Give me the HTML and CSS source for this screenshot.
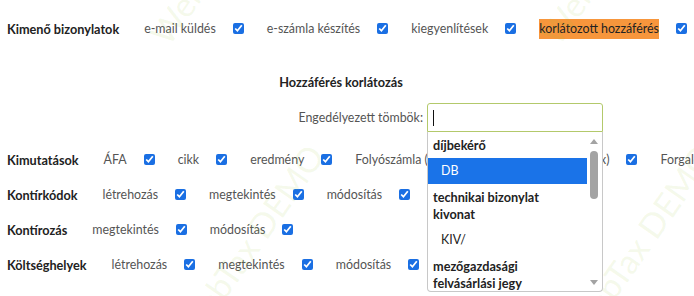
FILE: index.html
```html
<!DOCTYPE html>
<html lang="hu">
<head>
    <meta charset="UTF-8">
    <title>Jogosultságok</title>
    <link rel="stylesheet" href="styles.css">
</head>
<body>
    <div class="page">
        <div class="perm-row">
            <span class="group">Kimenő bizonylatok</span>
            <span class="item">e-mail küldés</span><input type="checkbox" checked>
            <span class="item">e-számla készítés</span><input type="checkbox" checked>
            <span class="item">kiegyenlítések</span><input type="checkbox" checked>
            <span class="item marked">korlátozott hozzáférés</span><input type="checkbox" checked>
        </div>

        <div class="limit">
            <h3>Hozzáférés korlátozás</h3>
            <div class="limit-row">
                <label>Engedélyezett tömbök:</label>
                <div class="picker">
                    <div class="picker-input"><span class="caret"></span></div>
                    <div class="picker-list">
                        <div class="options">
                            <div class="opt-group">díjbekérő</div>
                            <div class="opt selected">DB</div>
                            <div class="opt-group">technikai bizonylat<br>kivonat</div>
                            <div class="opt">KIV/</div>
                            <div class="opt-group">mezőgazdasági<br>felvásárlási jegy</div>
                        </div>
                        <div class="scrollbar">
                            <span class="arrow up"></span>
                            <span class="thumb"></span>
                            <span class="arrow down"></span>
                        </div>
                    </div>
                </div>
            </div>
        </div>

        <div class="perm-row">
            <span class="group">Kimutatások</span>
            <span class="item">ÁFA</span><input type="checkbox" checked>
            <span class="item">cikk</span><input type="checkbox" checked>
            <span class="item">eredmény</span><input type="checkbox" checked>
            <span class="item">Folyószámla (Analitika, Kivonat, Excel, Fix, xlsx)</span><input type="checkbox" checked>
            <span class="item">Forgalom</span>
        </div>
        <div class="perm-row">
            <span class="group">Kontírkódok</span>
            <span class="item">létrehozás</span><input type="checkbox" checked>
            <span class="item">megtekintés</span><input type="checkbox" checked>
            <span class="item">módosítás</span><input type="checkbox" checked>
        </div>
        <div class="perm-row">
            <span class="group">Kontírozás</span>
            <span class="item">megtekintés</span><input type="checkbox" checked>
            <span class="item">módosítás</span><input type="checkbox" checked>
        </div>
        <div class="perm-row">
            <span class="group">Költséghelyek</span>
            <span class="item">létrehozás</span><input type="checkbox" checked>
            <span class="item">megtekintés</span><input type="checkbox" checked>
            <span class="item">módosítás</span><input type="checkbox" checked>
        </div>
    </div>

    <!-- vízjel -->
    <div class="watermark">
        <span style="left: 172px; top: 50px;">WebTax DEMO</span>
        <span style="left: 198px; top: 346px;">WebTax DEMO</span>
        <span style="left: 562px; top: 50px;">WebTax DEMO</span>
        <span style="left: 588px; top: 346px;">WebTax DEMO</span>
    </div>
</body>
</html>
```

FILE: styles.css
```css
* { margin: 0; padding: 0; box-sizing: border-box; }
html { overflow: hidden; }
body {
    font-family: Lato, 'Noto Sans', sans-serif;
    font-size: 12.4px;
    color: #555;
    background: white;
    overflow-x: hidden;
    min-height: 296px;
}
.page {
    padding: 11px 7px 0;
    white-space: nowrap;
}
.perm-row {
    display: flex;
    align-items: center;
    height: 35px;
}
.group {
    font-size: 12.7px;
    font-weight: bold;
    color: #222;
    margin-right: 25px;
}
.item {
    margin-right: 17px;
}
.marked {
    background: #f7963c;
    color: #222;
    line-height: 20px;
}
input[type="checkbox"] {
    width: 11px;
    height: 11px;
    margin: 0 23px 0 0;
    accent-color: #1a6fe3;
    flex: none;
}
.limit {
    width: 668px;
    padding-top: 27px;
    margin-bottom: 10px;
}
.limit h3 {
    text-align: center;
    font-size: 12.7px;
    color: #222;
    line-height: 18px;
    margin-bottom: 12px;
}
.limit-row {
    display: flex;
    align-items: center;
    justify-content: flex-end;
    width: 596px;
}
.limit-row label {
    margin-right: 4px;
}
.picker {
    position: relative;
    width: 176px;
}
.picker-input {
    height: 29px;
    border: 1px solid #b3c96b;
    border-radius: 3px 3px 0 0;
    padding: 6px 5px;
}
.caret {
    display: block;
    width: 1px;
    height: 16px;
    background: #111;
}
.picker-list {
    position: absolute;
    top: 29px;
    left: 0;
    width: 176px;
    height: 160px;
    background: white;
    border: 1px solid #c8c8c8;
    border-top: none;
    border-radius: 0 0 4px 4px;
    display: flex;
    overflow: hidden;
    z-index: 2;
}
.options {
    flex: 1;
    color: #222;
}
.opt-group {
    font-size: 12.7px;
    font-weight: bold;
    padding: 5px 5px 4px;
    line-height: 17px;
}
.opt {
    height: 26px;
    line-height: 26px;
    padding-left: 13px;
}
.opt.selected {
    background: #1a73e8;
    color: white;
}
.scrollbar {
    width: 15px;
    position: relative;
}
.thumb {
    position: absolute;
    left: 3px;
    top: 19px;
    width: 8px;
    height: 48px;
    border-radius: 4px;
    background: #a3a3a3;
}
.arrow {
    position: absolute;
    left: 3px;
    width: 0;
    height: 0;
    border-left: 4px solid transparent;
    border-right: 4px solid transparent;
}
.arrow.up { top: 7px; border-bottom: 5px solid #a3a3a3; }
.arrow.down { bottom: 6px; border-top: 5px solid #a3a3a3; }
.watermark {
    position: absolute;
    inset: 0;
    pointer-events: none;
    overflow: hidden;
}
.watermark span {
    position: absolute;
    font-size: 34px;
    color: rgba(150, 200, 50, 0.1);
    transform: rotate(-55deg);
    transform-origin: 0 100%;
    line-height: 34px;
    margin-top: -34px;
    white-space: nowrap;
}
```
